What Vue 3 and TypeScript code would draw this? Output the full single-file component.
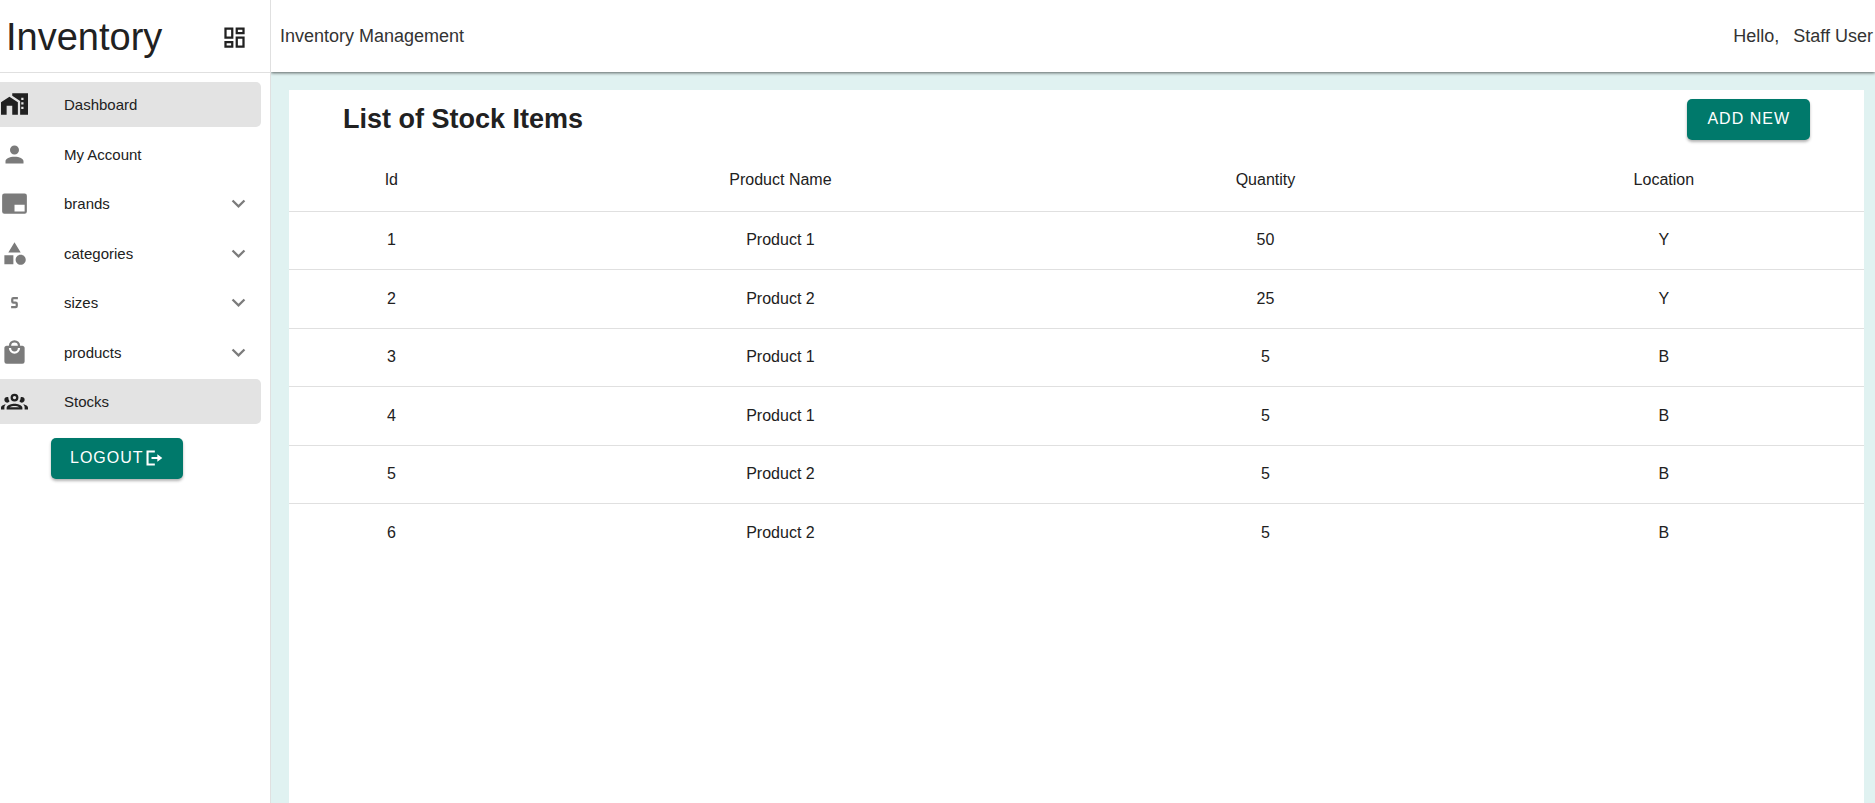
<script setup lang="ts">
interface NavItem {
  label: string
  icon: string
  active?: boolean
  group?: boolean
}

interface StockItem {
  id: number
  product: string
  quantity: number
  location: string
}

const icons: Record<string, string> = {
  dashboard:
    'M19,5V7H15V5H19M9,5V11H5V5H9M19,13V19H15V13H19M9,17V19H5V17H9M21,3H13V9H21V3M11,3H3V13H11V3M21,11H13V21H21V11M11,15H3V21H11V15Z',
  home: 'M10,2V4.26L17,8.93V21H24V2H10M20,8H18V6H20V8M20,12H18V10H20V12M20,16H18V14H20V16M7.5,5L0,10V21H5V13H10V21H15V10L7.5,5Z',
  account:
    'M12,4A4,4 0 0,1 16,8A4,4 0 0,1 12,12A4,4 0 0,1 8,8A4,4 0 0,1 12,4M12,14C16.42,14 20,15.79 20,18V20H4V18C4,15.79 7.58,14 12,14Z',
  watermark:
    'M21,3H3A2,2 0 0,0 1,5V19A2,2 0 0,0 3,21H21A2,2 0 0,0 23,19V5A2,2 0 0,0 21,3M21,19H12V13H21V19Z',
  shape:
    'M11,13.5V21.5H3V13.5H11M12,2L17.5,11H6.5L12,2M17.5,13C20,13 22,15 22,17.5C22,20 20,22 17.5,22C15,22 13,20 13,17.5C13,15 15,13 17.5,13Z',
  size: 'M11,7A2,2 0 0,0 9,9V11A2,2 0 0,0 11,13H13V15H9V17H13A2,2 0 0,0 15,15V13A2,2 0 0,0 13,11H11V9H15V7H11Z',
  shopping:
    'M12,13A5,5 0 0,1 7,8H9A3,3 0 0,0 12,11A3,3 0 0,0 15,8H17A5,5 0 0,1 12,13M12,3A3,3 0 0,1 15,6H9A3,3 0 0,1 12,3M19,6H17A5,5 0 0,0 12,1A5,5 0 0,0 7,6H5C3.89,6 3,6.89 3,8V20A2,2 0 0,0 5,22H19A2,2 0 0,0 21,20V8C21,6.89 20.1,6 19,6Z',
  group:
    'M12,5A3.5,3.5 0 0,0 8.5,8.5A3.5,3.5 0 0,0 12,12A3.5,3.5 0 0,0 15.5,8.5A3.5,3.5 0 0,0 12,5M12,7A1.5,1.5 0 0,1 13.5,8.5A1.5,1.5 0 0,1 12,10A1.5,1.5 0 0,1 10.5,8.5A1.5,1.5 0 0,1 12,7M5.5,8A2.5,2.5 0 0,0 3,10.5C3,11.44 3.53,12.25 4.29,12.68C4.65,12.88 5.06,13 5.5,13C5.94,13 6.35,12.88 6.71,12.68C7.08,12.47 7.39,12.17 7.62,11.81C6.89,10.86 6.5,9.7 6.5,8.5C6.5,8.41 6.5,8.31 6.5,8.22C6.2,8.08 5.86,8 5.5,8M18.5,8C18.14,8 17.8,8.08 17.5,8.22C17.5,8.31 17.5,8.41 17.5,8.5C17.5,9.7 17.11,10.86 16.38,11.81C16.5,12 16.63,12.15 16.78,12.3C16.94,12.45 17.1,12.58 17.29,12.68C17.65,12.88 18.06,13 18.5,13C18.94,13 19.35,12.88 19.71,12.68C20.47,12.25 21,11.44 21,10.5A2.5,2.5 0 0,0 18.5,8M12,14C9.66,14 5,15.17 5,17.5V19H19V17.5C19,15.17 14.34,14 12,14M4.71,14.55C2.78,14.78 0,15.76 0,17.5V19H3V17.07C3,16.06 3.69,15.22 4.71,14.55M19.29,14.55C20.31,15.22 21,16.06 21,17.07V19H24V17.5C24,15.76 21.22,14.78 19.29,14.55M12,16C13.53,16 15.24,16.5 16.23,17H7.77C8.76,16.5 10.47,16 12,16Z',
  chevron: 'M7.41,8.58L12,13.17L16.59,8.58L18,10L12,16L6,10L7.41,8.58Z',
  logout: 'M3,3H13V5.5H5.5V18.5H13V21H3V3M16,7.5L22,12L16,16.5V13.2H9V10.8H16V7.5Z',
}

const navItems: NavItem[] = [
  { label: 'Dashboard', icon: 'home', active: true },
  { label: 'My Account', icon: 'account' },
  { label: 'brands', icon: 'watermark', group: true },
  { label: 'categories', icon: 'shape', group: true },
  { label: 'sizes', icon: 'size', group: true },
  { label: 'products', icon: 'shopping', group: true },
  { label: 'Stocks', icon: 'group', active: true },
]

const stock: StockItem[] = [
  { id: 1, product: 'Product 1', quantity: 50, location: 'Y' },
  { id: 2, product: 'Product 2', quantity: 25, location: 'Y' },
  { id: 3, product: 'Product 1', quantity: 5, location: 'B' },
  { id: 4, product: 'Product 1', quantity: 5, location: 'B' },
  { id: 5, product: 'Product 2', quantity: 5, location: 'B' },
  { id: 6, product: 'Product 2', quantity: 5, location: 'B' },
]
</script>

<template>
  <div class="layout">
    <aside class="drawer">
      <div class="brand">
        <span class="brand-name">Inventory</span>
        <button class="icon-btn" type="button" aria-label="Toggle menu">
          <svg class="icon" viewBox="0 0 24 24" aria-hidden="true"><path :d="icons.dashboard" /></svg>
        </button>
      </div>
      <nav aria-label="Main">
        <ul class="nav-list">
          <li v-for="item in navItems" :key="item.label">
            <component
              :is="item.group ? 'button' : 'a'"
              class="nav-item"
              :class="{ active: item.active }"
              :href="item.group ? undefined : '#'"
              :type="item.group ? 'button' : undefined"
              :aria-expanded="item.group ? 'false' : undefined"
            >
              <svg class="icon" viewBox="0 0 24 24" aria-hidden="true"><path :d="icons[item.icon]" /></svg>
              <span class="nav-label">{{ item.label }}</span>
              <svg v-if="item.group" class="icon" viewBox="0 0 24 24" aria-hidden="true">
                <path :d="icons.chevron" />
              </svg>
            </component>
          </li>
        </ul>
      </nav>
      <button class="btn logout" type="button">
        <span>LOGOUT</span>
        <svg class="btn-icon" viewBox="0 0 24 24" aria-hidden="true"><path :d="icons.logout" /></svg>
      </button>
    </aside>

    <div class="page">
      <header class="app-bar">
        <span>Inventory Management</span>
        <div class="greeting"><span>Hello,</span><span>Staff User</span></div>
      </header>
      <main class="content">
        <section class="card">
          <div class="card-head">
            <h1>List of Stock Items</h1>
            <button class="btn" type="button">ADD NEW</button>
          </div>
          <table class="stock-table">
            <thead>
              <tr>
                <th scope="col">Id</th>
                <th scope="col">Product Name</th>
                <th scope="col">Quantity</th>
                <th scope="col">Location</th>
              </tr>
            </thead>
            <tbody>
              <tr v-for="row in stock" :key="row.id">
                <td>{{ row.id }}</td>
                <td>{{ row.product }}</td>
                <td>{{ row.quantity }}</td>
                <td>{{ row.location }}</td>
              </tr>
            </tbody>
          </table>
        </section>
      </main>
    </div>
  </div>
</template>

<style>
body {
  margin: 0;
}
</style>

<style scoped>
.layout {
  display: flex;
  min-height: 100vh;
  font-family: 'Liberation Sans', Arial, sans-serif;
  font-size: 16px;
  color: #212121;
  background: #fff;
}

.layout * {
  box-sizing: border-box;
}

button {
  font: inherit;
  border: 0;
  cursor: pointer;
}

.drawer {
  z-index: 2;
  flex: 0 0 271px;
  border-right: 1px solid #e0e0e0;
  background: #fff;
}

.brand {
  display: flex;
  align-items: center;
  justify-content: space-between;
  height: 73px;
  padding: 2px 22px 0 6px;
  border-bottom: 1px solid #e0e0e0;
}

.brand-name {
  font-size: 38px;
  line-height: 44px;
}

.icon-btn {
  display: flex;
  padding: 0;
  background: none;
  color: inherit;
}

.icon {
  flex: none;
  width: 27px;
  height: 27px;
  fill: currentColor;
}

.nav-list {
  margin: 0;
  padding: 9px 9px 0 0;
  list-style: none;
}

.nav-list li {
  margin-bottom: 5px;
}

.nav-list li:nth-child(even) {
  margin-bottom: 4px;
}

.nav-item {
  display: flex;
  align-items: center;
  gap: 36px;
  width: 100%;
  height: 45px;
  padding: 0 9px 0 1px;
  border-radius: 0 5px 5px 0;
  background: none;
  color: #7b7b7b;
  text-align: left;
  text-decoration: none;
}

.nav-item.active {
  background: #e3e3e3;
  color: #212121;
}

.nav-label {
  flex: 1;
  font-size: 15px;
  line-height: 18px;
  color: #212121;
}

.btn {
  display: inline-flex;
  align-items: center;
  justify-content: center;
  height: 41px;
  padding: 0 20px 2px;
  border-radius: 5px;
  background: #00796b;
  color: #fff;
  letter-spacing: 1px;
  box-shadow: 0 2px 3px rgba(0, 0, 0, 0.3);
}

.btn-icon {
  width: 20px;
  height: 20px;
  fill: currentColor;
}

.logout {
  margin: 9px 0 0 51px;
  padding: 0 19px 2px;
}

.page {
  display: flex;
  flex: 1;
  flex-direction: column;
  min-width: 0;
}

.app-bar {
  z-index: 1;
  display: flex;
  align-items: center;
  justify-content: space-between;
  height: 72px;
  padding: 0 2px 0 9px;
  font-size: 18px;
  color: #333;
  background: #fff;
  box-shadow: 0 1px 3px rgba(0, 0, 0, 0.6);
}

.greeting {
  display: flex;
  gap: 14px;
}

.content {
  display: flex;
  flex: 1;
  padding: 18px 11px 0 18px;
  background: #e0f2f1;
}

.card {
  flex: 1;
  background: #fff;
}

.card-head {
  display: flex;
  align-items: flex-start;
  justify-content: space-between;
  height: 58px;
  padding: 9px 54px 0;
}

h1 {
  margin: 0;
  font-size: 27px;
  line-height: 40px;
}

.stock-table {
  width: 100%;
  border-spacing: 0;
}

th,
td {
  height: 58px;
  padding: 0 18px 1px;
  font-weight: 400;
  text-align: center;
}

th {
  height: 64px;
  padding-bottom: 0;
}

tr:nth-child(even) td {
  height: 59px;
}

th,
tr:not(:last-child) td {
  border-bottom: 1px solid #e0e0e0;
}
</style>
